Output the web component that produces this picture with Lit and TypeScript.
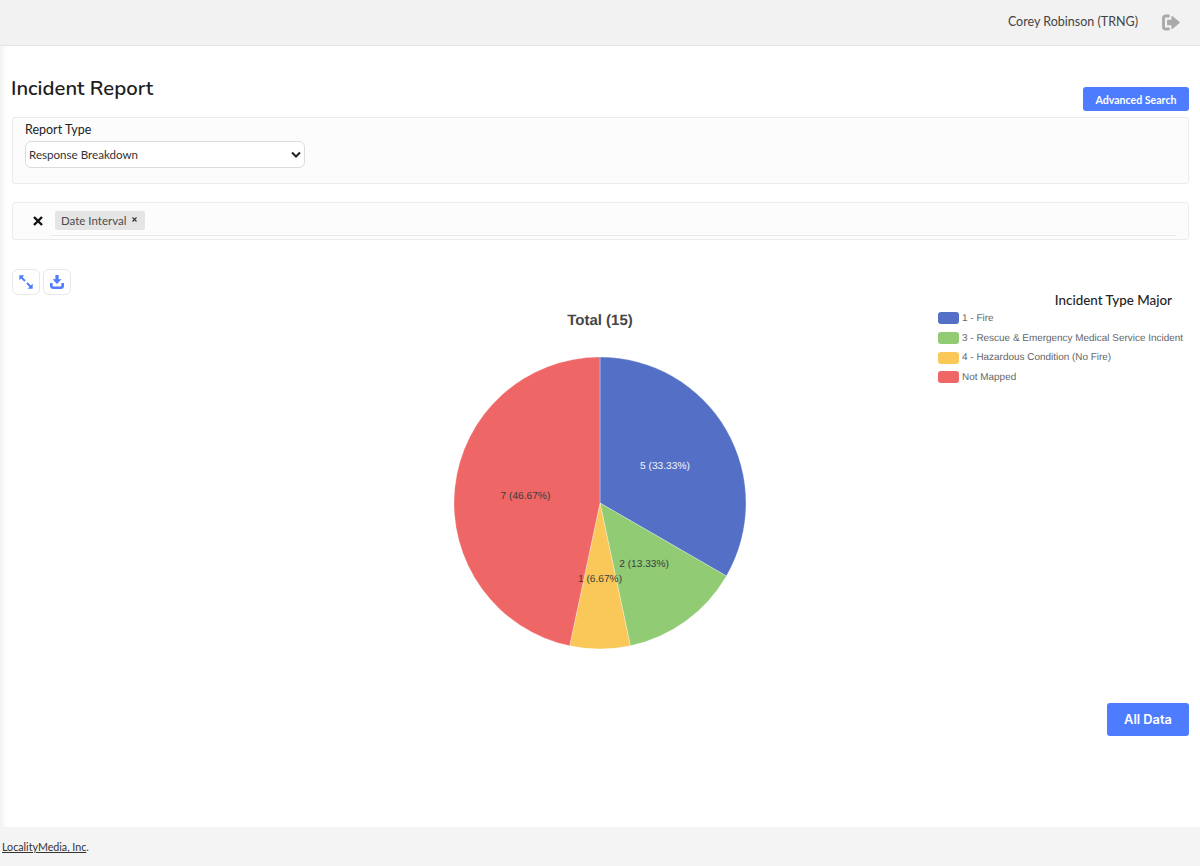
import { LitElement, html, css, svg } from "lit";
import { customElement } from "lit/decorators.js";

const SLICES = [
  { value: 5, pct: "33.33%", color: "#5470c6", text: "#f4f4f8", name: "1 - Fire" },
  { value: 2, pct: "13.33%", color: "#91cc75", text: "#3c3c3c", name: "3 - Rescue & Emergency Medical Service Incident" },
  { value: 1, pct: "6.67%", color: "#fac858", text: "#3c3c3c", name: "4 - Hazardous Condition (No Fire)" },
  { value: 7, pct: "46.67%", color: "#ee6666", text: "#3c3c3c", name: "Not Mapped" },
];
const CX = 149, CY = 161, R = 146;
const TOTAL = 15;

function pol(r: number, a: number) {
  return [CX + r * Math.sin(a), CY - r * Math.cos(a)];
}

function pie() {
  let a = 0;
  return SLICES.map((s) => {
    const sweep = (s.value / TOTAL) * Math.PI * 2;
    const [x1, y1] = pol(R, a);
    const [x2, y2] = pol(R, a + sweep);
    const [lx, ly] = pol(75, a + sweep / 2);
    a += sweep;
    return { s, d: `M${CX} ${CY}L${x1} ${y1}A${R} ${R} 0 ${sweep > Math.PI ? 1 : 0} 1 ${x2} ${y2}Z`, lx, ly };
  });
}

@customElement("app-root")
export class AppRoot extends LitElement {
  static styles = css`
    :host {
      display: flex;
      flex-direction: column;
      height: 866px;
      background: #fff;
      font-family: "Lato", "Liberation Sans", sans-serif;
      color: #333;
      overflow: hidden;
    }
    .top {
      flex: 0 0 46px;
      box-sizing: border-box;
      background: #f2f2f2;
      border-bottom: 1px solid #e4e4e4;
      display: flex;
      justify-content: flex-end;
      align-items: center;
      padding: 0 20px 3px 0;
      gap: 24px;
      font-size: 12.5px;
      color: #444;
    }
    .logout { width: 18px; height: 17px; display: block; margin-top: 2px; }
    .main {
      flex: 1;
      box-sizing: border-box;
      padding: 0 11px 0 12px;
      background: linear-gradient(to right, #f1f1f1 0, #fafafa 4px, #fff 8px);
      display: flex;
      flex-direction: column;
    }
    .title-row {
      display: flex;
      justify-content: space-between;
      align-items: flex-end;
      height: 65px;
    }
    h1 {
      margin: 0 0 9px -1px;
      font-family: "Nunito", "Open Sans", sans-serif;
      font-size: 20.3px;
      line-height: 28px;
      font-weight: 600;
      color: #1e1e1e;
    }
    .adv {
      width: 106px;
      height: 24px;
      background: #4d7cfe;
      color: #fff;
      border: 0;
      border-radius: 3px;
      font: 700 10.6px "Lato", sans-serif;
      padding: 1px 0 0;
    }
    .panel {
      box-sizing: border-box;
      border: 1px solid #ececec;
      border-radius: 3px;
      background: #fcfcfc;
    }
    .report {
      height: 67px;
      margin-top: 6px;
      padding: 3px 12px;
    }
    .report label {
      display: block;
      font-size: 12.5px;
      line-height: 18px;
      color: #222;
    }
    .select {
      width: 280px;
      height: 27px;
      box-sizing: border-box;
      margin-top: 2px;
      border: 1px solid #dcdcdc;
      border-radius: 6px;
      background: #fff;
      display: flex;
      align-items: center;
      justify-content: space-between;
      padding: 0 3px 0 3px;
      font-size: 11.6px;
      color: #333;
    }
    .chev { width: 10px; height: 7px; display: block; }
    .filter {
      height: 38px;
      margin-top: 18px;
      padding: 0 12px 0 12px;
      display: flex;
    }
    .clear {
      width: 26px;
      display: flex;
      align-items: center;
      justify-content: center;
      padding-bottom: 1px;
    }
    .clear svg { width: 10px; height: 10px; display: block; }
    .chips {
      flex: 1;
      height: 33px;
      border-bottom: 1px solid #e9e9e9;
      padding: 6px 0 0 4px;
      box-sizing: border-box;
    }
    .chip {
      display: inline-flex;
      align-items: center;
      gap: 6px;
      height: 19px;
      padding: 0 8px 0 6px;
      border-radius: 2px;
      background: #e5e5e5;
      font-size: 11.5px;
      color: #4c4c4c;
    }
    .chip svg { width: 5px; height: 5px; display: block; margin-bottom: 2px; }
    .chart {
      display: grid;
      grid-template-columns: 1fr 300px 1fr;
      margin-top: 29px;
      height: 412px;
    }
    .tools { display: flex; gap: 3px; align-items: flex-start; }
    .tool {
      width: 28px;
      height: 26px;
      box-sizing: border-box;
      border: 1px solid #e8e8e8;
      border-radius: 6px;
      background: #fff;
      padding: 0;
      display: flex;
      align-items: center;
      justify-content: center;
    }
    .tool svg { width: 14px; height: 14px; display: block; }
    .pie { margin-top: 42px; width: 300px; height: 345px; display: block; }
    .pie text { font-family: "Liberation Sans", sans-serif; text-anchor: middle; text-rendering: geometricPrecision; }
    .pie .name { font-size: 15px; font-weight: 700; fill: #464646; }
    .pie .lab { font-size: 10.2px; }
    .legend { justify-self: end; margin-top: 22px; margin-right: 6px; }
    .legend h2 {
      margin: 0 0 -.5px;
      text-align: right;
      padding-right: 11px;
      font-size: 13.4px;
      line-height: 18px;
      font-weight: 500;
      color: #222;
    }
    .item {
      display: flex;
      align-items: center;
      gap: 3.5px;
      height: 19.7px;
      font: 9.95px "Liberation Sans", sans-serif;
      text-rendering: geometricPrecision;
      color: #666;
    }
    .sw { width: 21px; height: 12px; border-radius: 3px; flex: none; }
    .bottom { display: flex; justify-content: flex-end; margin-top: 22px; }
    .all {
      width: 82px;
      height: 33px;
      border: 0;
      border-radius: 3px;
      background: #4d7cfe;
      color: #fff;
      font: 600 12.8px "Inter", sans-serif;
      padding: 0;
    }
    .foot {
      flex: 0 0 39px;
      background: #f4f4f4;
      display: flex;
      align-items: center;
      padding-left: 2px;
      font-size: 10.7px;
      color: #444;
    }
    .foot a { color: #333; text-decoration: underline; }
  `;

  render() {
    return html`
      <div class="top">
        <span>Corey Robinson (TRNG)</span>
        <svg class="logout" viewBox="0 0 18 17" fill="#a9a9a9">
          <path d="M6.500 2H3.500C2.300 2 1.500 2.800 1.500 4v9c0 1.200.8 2 2 2h3" fill="none" stroke="#a9a9a9" stroke-width="2.800" stroke-linecap="round"/>
          <path d="M10.600 2.200 17.600 7.900c.4.300.4.900 0 1.200l-7 5.700c-.5.400-1.200.1-1.200-.6v-3H5.800c-.4 0-.7-.3-.7-.7V6.500c0-.4.300-.7.700-.7h3.600v-3c0-.7.700-1 1.200-.6z"/>
        </svg>
      </div>
      <div class="main">
        <div class="title-row">
          <h1>Incident Report</h1>
          <button class="adv">Advanced Search</button>
        </div>
        <div class="panel report">
          <label>Report Type</label>
          <div class="select">
            <span>Response Breakdown</span>
            <svg class="chev" viewBox="0 0 10 7" fill="none" stroke="#222" stroke-width="2"><path d="M1 1.500l4 4 4-4"/></svg>
          </div>
        </div>
        <div class="panel filter">
          <div class="clear">
            <svg viewBox="0 0 10 10" stroke="#111" stroke-width="2.400" fill="none"><path d="M1 1l8 8M9 1l-8 8"/></svg>
          </div>
          <div class="chips">
            <span class="chip">Date Interval
              <svg viewBox="0 0 5 5" stroke="#333" stroke-width="1.100" fill="none"><path d="M.5.500l4 4M4.500.500l-4 4"/></svg>
            </span>
          </div>
        </div>
        <div class="chart">
          <div class="tools">
            <button class="tool" aria-label="Expand">
              <svg viewBox="0 0 14 14" fill="none">
                <path d="M2 2l4 4M12 12L8 8" stroke="#4d7cfe" stroke-width="1.900"/>
                <path d="M.3.300h5L.3 5.300z" fill="#4d7cfe"/>
                <path d="M13.700 13.700h-5l5-5z" fill="#4d7cfe"/>
              </svg>
            </button>
            <button class="tool" aria-label="Download">
              <svg viewBox="0 0 14 14" fill="none">
                <path d="M5.400 0h3.200v4.200h2.900L7 8.900 2.500 4.200h2.900z" fill="#4d7cfe"/>
                <path d="M1.300 8v2.500c0 1.500.8 2.200 2.200 2.200h7c1.400 0 2.200-.7 2.200-2.200V8" stroke="#4d7cfe" stroke-width="2.600"/>
              </svg>
            </button>
          </div>
          <svg class="pie" viewBox="0 0 300 345">
            <text class="name" x="149" y="14">Total (15)</text>
            <g transform="translate(0 31)">
              ${pie().map((p) => svg`<path d=${p.d} fill=${p.s.color} stroke="#fff" stroke-width="0.3"></path>`)}
              ${pie().map((p) => svg`<text class="lab" x=${p.lx} y=${p.ly + 3.500} fill=${p.s.text}>${p.s.value} (${p.s.pct})</text>`)}
            </g>
          </svg>
          <div class="legend">
            <h2>Incident Type Major</h2>
            ${SLICES.map(
              (s) => html`<div class="item"><span class="sw" style="background:${s.color}"></span>${s.name}</div>`
            )}
          </div>
        </div>
        <div class="bottom"><button class="all">All Data</button></div>
      </div>
      <div class="foot"><span><a>LocalityMedia, Inc</a>.</span></div>
    `;
  }
}
